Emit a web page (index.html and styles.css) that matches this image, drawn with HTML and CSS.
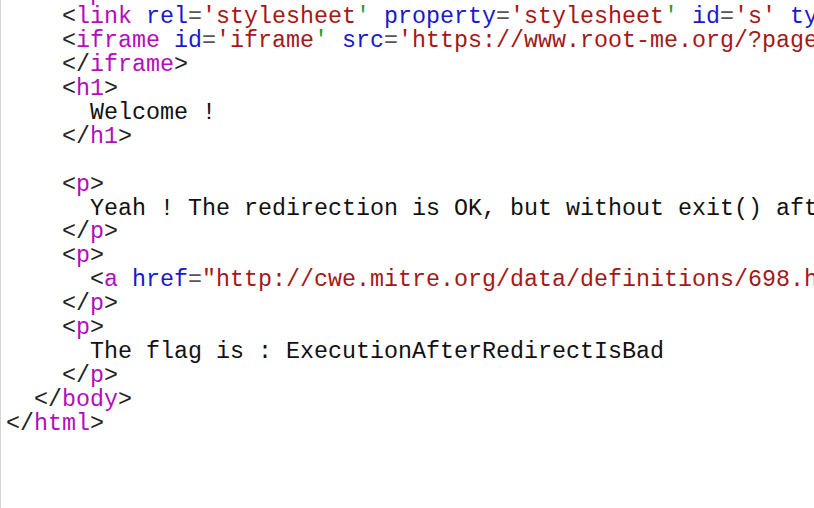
FILE: index.html
```html
<!DOCTYPE html>
<html>
<head>
<meta charset="utf-8">
<link rel="stylesheet" href="styles.css">
</head>
<body>
<div class="source">
<div class="line">    <span class="br">&lt;</span><span class="tag">span</span><span class="br">&gt;</span></div>
<div class="line">    <span class="br">&lt;</span><span class="tag">link</span> <span class="attr">rel</span><span class="eq">=</span><span class="val">'stylesheet</span><span class="q">'</span> <span class="attr">property</span><span class="eq">=</span><span class="val">'stylesheet</span><span class="q">'</span> <span class="attr">id</span><span class="eq">=</span><span class="val">'s'</span> <span class="attr">type</span><span class="eq">=</span><span class="val">'text/css</span><span class="q">'</span> <span class="attr">href</span><span class="eq">=</span><span class="val">'//repository.root-me.org/css/style.css</span><span class="q">'</span> <span class="br">/&gt;</span></div>
<div class="line">    <span class="br">&lt;</span><span class="tag">iframe</span> <span class="attr">id</span><span class="eq">=</span><span class="val">'iframe</span><span class="q">'</span> <span class="attr">src</span><span class="eq">=</span><span class="val">'https://www.root-me.org/?page=externe_header</span><span class="q">'</span><span class="br">&gt;</span></div>
<div class="line">    <span class="br">&lt;/</span><span class="tag">iframe</span><span class="br">&gt;</span></div>
<div class="line">    <span class="br">&lt;</span><span class="tag">h1</span><span class="br">&gt;</span></div>
<div class="line">      Welcome !</div>
<div class="line">    <span class="br">&lt;/</span><span class="tag">h1</span><span class="br">&gt;</span></div>
<div class="line"> </div>
<div class="line">    <span class="br">&lt;</span><span class="tag">p</span><span class="br">&gt;</span></div>
<div class="line">      Yeah ! The redirection is OK, but without exit() after the header('Location: ...'), PHP just continue the execution and send the page content !...</div>
<div class="line">    <span class="br">&lt;/</span><span class="tag">p</span><span class="br">&gt;</span></div>
<div class="line">    <span class="br">&lt;</span><span class="tag">p</span><span class="br">&gt;</span></div>
<div class="line">      <span class="br">&lt;</span><span class="tag">a</span> <span class="attr">href</span><span class="eq">=</span><span class="val">"http://cwe.mitre.org/data/definitions/698.html"</span><span class="br">&gt;</span>CWE-698: Execution After Redirect (EAR)<span class="br">&lt;/</span><span class="tag">a</span><span class="br">&gt;</span></div>
<div class="line">    <span class="br">&lt;/</span><span class="tag">p</span><span class="br">&gt;</span></div>
<div class="line">    <span class="br">&lt;</span><span class="tag">p</span><span class="br">&gt;</span></div>
<div class="line">      The flag is : ExecutionAfterRedirectIsBad</div>
<div class="line">    <span class="br">&lt;/</span><span class="tag">p</span><span class="br">&gt;</span></div>
<div class="line">  <span class="br">&lt;/</span><span class="tag">body</span><span class="br">&gt;</span></div>
<div class="line"><span class="br">&lt;/</span><span class="tag">html</span><span class="br">&gt;</span></div>
</div>
</body>
</html>
```

FILE: styles.css
```css
html, body {
  margin: 0;
  padding: 0;
  background: #ffffff;
  overflow: hidden;
  height: 100%;
}
body {
  border-left: 1px solid #d4d4d4;
  box-sizing: border-box;
}
.source {
  margin-top: -17.5px;
  padding-left: 5px;
  font-family: "Courier", "Nimbus Mono PS", "Nimbus Mono L", "FreeMono", "Liberation Mono", monospace;
  font-size: 23.33px;
  line-height: 23.9px;
  color: #111111;
}
.line {
  height: 23.9px;
  white-space: pre;
}
.br { color: #222222; }
.tag { color: #b40cbe; }
.attr { color: #1818d0; }
.eq { color: #555555; }
.val { color: #a41818; }
.q { color: #2e9a2e; }
```
